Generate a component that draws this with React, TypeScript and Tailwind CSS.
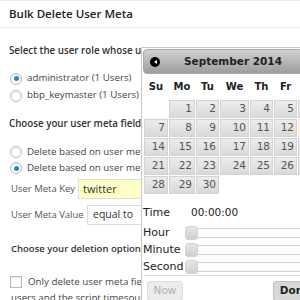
import React from "react";

const Radio = ({ checked }: { checked?: boolean }) => (
  <span className="flex h-[12px] w-[12px] shrink-0 items-center justify-center rounded-full border border-[#b4b9be] bg-white shadow-[inset_0_1px_2px_rgba(0,0,0,0.1)]">
    {checked && <span className="h-[5px] w-[5px] rounded-full bg-[#1e8cbe]" />}
  </span>
);

const weeks: (number | null)[][] = [
  [null, 1, 2, 3, 4, 5, 6],
  [7, 8, 9, 10, 11, 12, 13],
  [14, 15, 16, 17, 18, 19, 20],
  [21, 22, 23, 24, 25, 26, 27],
  [28, 29, 30, null, null, null, null],
];

const Slider = ({ label }: { label: string }) => (
  <div className="flex h-[17px] items-center">
    <div className="w-[42px] shrink-0 text-[11px] leading-none text-[#222]">{label}</div>
    <div className="relative h-[10px] flex-1 rounded-[3px] border border-[#d0d0d0] bg-white">
      <div className="absolute left-[-1px] top-[-3px] h-[14px] w-[13px] rounded-[3px] border border-[#d3d3d3] bg-gradient-to-b from-[#e6e6e6] to-[#d0d0d0]" />
    </div>
  </div>
);

function Datepicker() {
  return (
    <div className="absolute left-[141px] top-[47px] w-[200px] h-[270px] border border-[#c8c8c8] bg-white p-[1px] font-['DejaVu_Sans',sans-serif]">
      <div className="flex h-[25px] items-center rounded-[4px] border border-[#aaa] bg-gradient-to-b from-[#d2d2d2] to-[#9d9d9d] pl-[6px]">
        <span className="flex h-[10px] w-[10px] items-center justify-center rounded-full bg-black">
          <span className="h-0 w-0 border-y-[2.5px] border-r-[3px] border-y-transparent border-r-white" />
        </span>
        <span className="ml-[24px] text-[10.5px] font-bold text-[#222]">September 2014</span>
      </div>
      <div className="grid grid-cols-[24px_26px_23px_29px_23px_23px_24px] gap-[1px] px-[1px]">
        {["Su", "Mo", "Tu", "We", "Th", "Fr", "Sa"].map((d) => (
          <div key={d} className="flex h-[25px] items-center justify-center text-[10px] font-bold text-[#222]">
            {d}
          </div>
        ))}
        {weeks.flat().map((n, i) =>
          n === null ? (
            <div key={i} className="h-[18px]" />
          ) : (
            <div
              key={i}
              className={
                n === 13
                  ? "flex h-[18px] items-center justify-end border border-[#fcefa1] bg-[#fbf9ee] pr-[2px] text-[10.5px] text-[#363636]"
                  : "flex h-[18px] items-center justify-end border border-[#d3d3d3] bg-gradient-to-b from-[#ececec] to-[#d9d9d9] pr-[2px] text-[10.5px] text-[#555]"
              }
            >
              {n}
            </div>
          )
        )}
      </div>
      <div className="mt-[10px] flex h-[17px] items-center">
        <div className="w-[48px] shrink-0 text-[11px] leading-none text-[#222]">Time</div>
        <div className="text-[10.5px] leading-none text-[#222]">00:00:00</div>
      </div>
      <div className="mt-[3px]">
        <Slider label="Hour" />
        <Slider label="Minute" />
        <Slider label="Second" />
      </div>
      <div className="flex gap-[90px] border-t border-[#ddd] pl-[4px] pt-[5px]">
        <div className="flex h-[20px] w-[36px] shrink-0 items-center justify-center rounded-[3px] border border-[#ddd] bg-[#ececec] text-[10.5px] text-[#b0b0b0]">
          Now
        </div>
        <div className="flex h-[20px] w-[44px] shrink-0 items-center justify-center rounded-[3px] border border-[#c0c0c0] bg-[#d8d8d8] text-[10.5px] font-bold text-[#222]">
          Done
        </div>
      </div>
    </div>
  );
}

export default function App() {
  return (
    <div className="relative h-[300px] w-[300px] overflow-hidden bg-white font-['Open_Sans',sans-serif] text-[#444]">
      <div className="flex h-[28px] items-center border-y border-[#eaeaea] px-[9px] text-[11.5px] font-semibold text-[#222]">
        Bulk Delete User Meta
      </div>
      <div className="flex w-[141px] flex-col overflow-hidden">
        <div className="mt-[16px] flex h-[14px] items-center whitespace-nowrap px-[9px] text-[9.75px] font-semibold text-[#333]">
          Select the user role whose user meta fields you want to delete
        </div>
        <div className="mt-[12px] flex h-[17px] items-center gap-[5px] whitespace-nowrap pl-[10px] text-[9.75px]">
          <Radio checked />
          administrator (1 Users)
        </div>
        <div className="flex h-[17px] items-center gap-[5px] whitespace-nowrap pl-[10px] text-[9.75px]">
          <Radio />
          bbp_keymaster (1 Users)
        </div>
        <div className="mt-[13px] flex h-[14px] items-center whitespace-nowrap px-[9px] text-[9.75px] font-semibold text-[#333]">
          Choose your user meta field settings
        </div>
        <div className="mt-[13px] flex h-[16px] items-center gap-[5px] whitespace-nowrap pl-[10px] text-[9.75px]">
          <Radio />
          Delete based on user meta key name only
        </div>
        <div className="flex h-[16px] items-center gap-[5px] whitespace-nowrap pl-[10px] text-[9.75px]">
          <Radio checked />
          Delete based on user meta key name and value
        </div>
        <div className="mt-[3px] flex h-[20px] items-center whitespace-nowrap pl-[11px] text-[9.5px] text-[#555]">
          <span className="w-[67px] shrink-0">User Meta Key</span>
          <div className="flex h-[20px] w-[120px] shrink-0 items-center border border-[#ddd] bg-[#ffffc6] pl-[4px] text-[11px] text-[#333]">
            twitter
          </div>
        </div>
        <div className="mt-[6px] flex h-[20px] items-center whitespace-nowrap pl-[11px] text-[9.5px] text-[#555]">
          <span className="w-[76px] shrink-0">User Meta Value</span>
          <div className="flex h-[20px] w-[100px] shrink-0 items-center border border-[#ddd] bg-white pl-[5px] text-[10.5px] text-[#333]">
            equal to
          </div>
        </div>
        <div className="mt-[17px] flex h-[14px] items-center whitespace-nowrap pl-[11px] text-[9.5px] font-semibold text-[#333]">
          Choose your deletion options
        </div>
        <div className="mt-[18px] flex h-[16px] items-center gap-[6px] whitespace-nowrap pl-[10px] text-[9.75px]">
          <span className="h-[12px] w-[12px] shrink-0 border border-[#b4b9be] bg-white shadow-[inset_0_1px_2px_rgba(0,0,0,0.1)]" />
          Only delete user meta fields from first 100 users
        </div>
        <div className="flex h-[16px] items-center whitespace-nowrap pl-[11px] text-[9.75px]">
          users and the script timesout
        </div>
      </div>
      <Datepicker />
    </div>
  );
}
